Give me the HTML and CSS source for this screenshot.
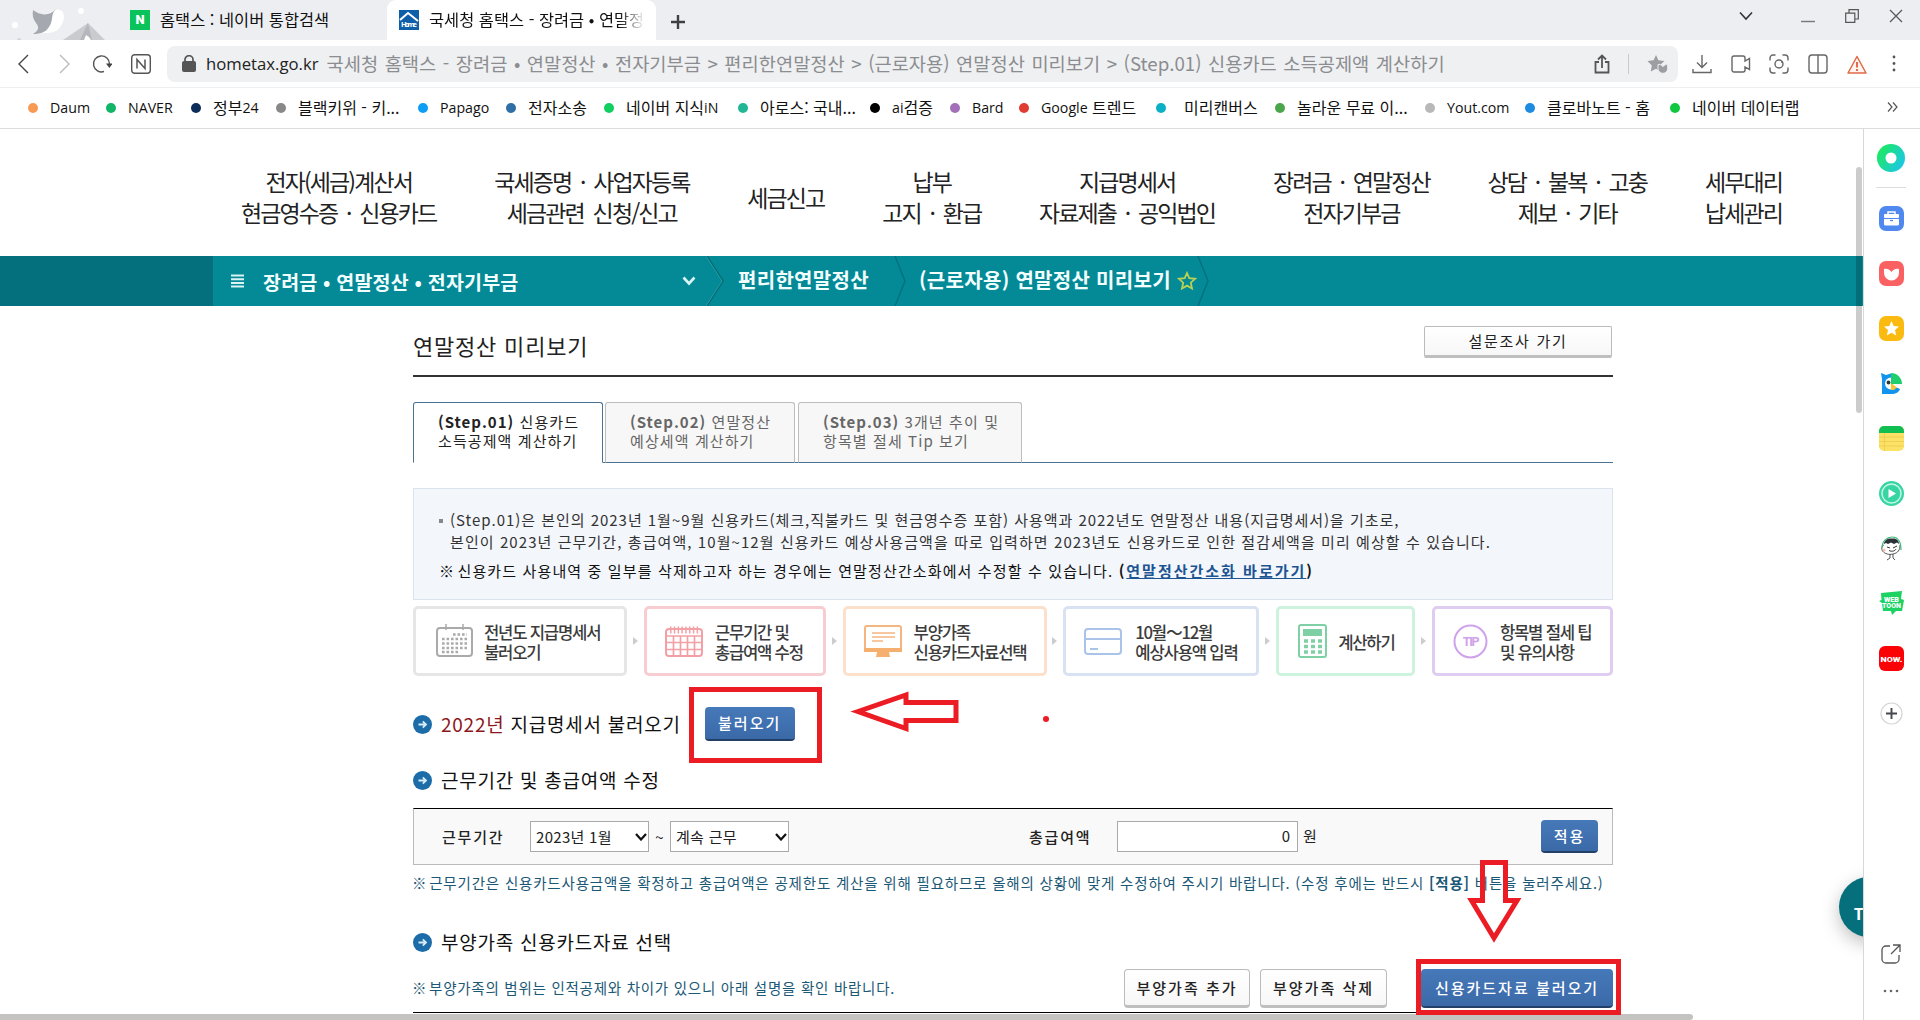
FILE: index.html
```html
<!DOCTYPE html>
<html lang="ko">

<head>
    <meta charset="UTF-8">
    <meta name="viewport" content="width=device-width, initial-scale=1.0">
    <title>국세청 홈택스 - 장려금 • 연말정산 • 전자기부금</title>
    <link rel="stylesheet" href="styles.css">
</head>

<body>
    <!-- browser tabs -->
    <div class="tabstrip">
        <svg class="skin" width="120" height="40" viewBox="0 0 120 40">
            <path d="M63 40 L88 23 L105 40Z" fill="#c9cbcf" />
            <path d="M88 23 L92 40 H80Z" fill="#b4b7bc" />
            <path d="M84 40 l2-5 3 2 2 3Z" fill="#fff" />
            <path d="M33 10 C40 16 48 15 54 10 C60 8 64 11 64 17 C63 28 55 34 45 33 L34 34 C40 30 40 27 37 23 C33 19 32 15 33 10Z" fill="#fff" />
            <path d="M33 10 C40 15 48 17 56 9 C50 15 54 20 49 27 C45 33 40 34 33 34 C38 31 40 28 36 23 C33 19 32 15 33 10Z" fill="#a5a9af" />
            <circle cx="81" cy="11" r="3" fill="#fff" />
            <circle cx="15" cy="25" r="3" fill="#fff" />
            <circle cx="19" cy="40" r="2" fill="#d2d4d8" />
        </svg>
        <div class="tab">
            <div class="naver_icon">N</div>
            <span>홈택스 : 네이버 통합검색</span>
        </div>
        <div class="tab tab_on">
            <svg width="20" height="20" viewBox="0 0 20 20">
                <rect width="20" height="20" fill="#0f5fa8" />
                <path d="M1 10 L9 3 L19 11" fill="none" stroke="#fff" stroke-width="2" />
                <text x="2" y="17" font-size="7.5" font-weight="bold" fill="#fff" font-family="Open Sans" textLength="16">Home</text>
            </svg>
            <span>국세청 홈택스 - 장려금 • 연말정</span>
        </div>
        <svg class="newtab" width="16" height="16" viewBox="0 0 16 16"><path d="M8 1V15M1 8H15" stroke="#3c4043" stroke-width="2.4" /></svg>
        <div class="win">
            <svg width="14" height="14" viewBox="0 0 14 14"><path d="M1 3.5L7 10L13 3.5" fill="none" stroke="#333" stroke-width="1.6" /></svg>
            <svg width="14" height="14" viewBox="0 0 14 14"><path d="M0 12.5H14" stroke="#777" stroke-width="1.4" /></svg>
            <svg width="14" height="14" viewBox="0 0 14 14"><path d="M.7 4.2H9.8V13.3H.7ZM4 4V.7H13.3V10H10" fill="none" stroke="#555" stroke-width="1.2" /></svg>
            <svg width="14" height="14" viewBox="0 0 14 14"><path d="M1 1L13 13M13 1L1 13" stroke="#555" stroke-width="1.2" /></svg>
        </div>
    </div>

    <!-- address bar -->
    <div class="toolbar">
        <div class="navs">
            <svg width="12" height="20" viewBox="0 0 12 20"><path d="M11 1L2 10L11 19" fill="none" stroke="#444" stroke-width="1.4" /></svg>
            <svg width="12" height="20" viewBox="0 0 12 20"><path d="M1 1L10 10L1 19" fill="none" stroke="#bbb" stroke-width="1.4" /></svg>
            <svg width="20" height="20" viewBox="0 0 20 20"><path d="M12 17.5A8 8 0 1 1 17.5 10" fill="none" stroke="#555" stroke-width="1.4" /><path d="M14 9.5H20.5L17.4 14Z" fill="#444" /></svg>
            <svg width="20" height="20" viewBox="0 0 20 20"><rect x=".7" y=".7" width="18.6" height="18.6" rx="3" fill="none" stroke="#555" stroke-width="1.4" /><path d="M6 14.5V5.5L14 14.5V5.5" fill="none" stroke="#555" stroke-width="1.5" /></svg>
        </div>
        <div class="address">
            <svg width="14" height="17" viewBox="0 0 14 17"><rect x="0" y="6" width="14" height="11" rx="2" fill="#555" /><path d="M3 7V4.5A4 3.8 0 0 1 11 4.5V7" fill="none" stroke="#555" stroke-width="1.7" /></svg>
            <span class="host">hometax.go.kr</span>
            <span class="path">국세청 홈택스 - 장려금 • 연말정산 • 전자기부금 &gt; 편리한연말정산 &gt; (근로자용) 연말정산 미리보기 &gt; (Step.01) 신용카드 소득공제액 계산하기</span>
            <svg class="share" width="16" height="20" viewBox="0 0 16 20"><path d="M5 8H1.5V18.5H14.5V8H11M8 14V2M4 5.5L8 1.5L12 5.5" fill="none" stroke="#555" stroke-width="1.8" /></svg>
            <i class="bar"></i>
            <svg width="21" height="20" viewBox="0 0 21 20"><path d="M9 1L11.4 6.3L17.5 7L13 11V17L9 14.8L3.8 17.5L4.8 11.5L.5 7L6.6 6.3Z" fill="#9c9ea1" /><path d="M11 10.5C12.5 10 14.5 11 16 12.5C17.5 11 19.5 10 20.7 10.5V14.5A4.8 4.8 0 0 1 11 14.5Z" fill="#9c9ea1" stroke="#eff0f2" /></svg>
        </div>
        <div class="tools">
            <svg width="20" height="20" viewBox="0 0 20 20"><path d="M10 1V13M5 8.5L10 13.5L15 8.5M1 15V18.5H19V15" fill="none" stroke="#666" stroke-width="1.4" /></svg>
            <svg width="20" height="20" viewBox="0 0 20 20"><path d="M3 2H12A2 2 0 0 1 14 4V7L18.5 4.5V15.5L14 13V16A2 2 0 0 1 12 18H3A2 2 0 0 1 1 16V4A2 2 0 0 1 3 2Z" fill="none" stroke="#666" stroke-width="1.4" /></svg>
            <svg width="20" height="20" viewBox="0 0 20 20"><path d="M1 6.5V4A3 3 0 0 1 4 1H6.5M13.5 1H16A3 3 0 0 1 19 4V6.5M19 13.5V16A3 3 0 0 1 16 19H13.5M6.5 19H4A3 3 0 0 1 1 16V13.5" fill="none" stroke="#666" stroke-width="1.4" /><circle cx="10" cy="10" r="4" fill="none" stroke="#666" stroke-width="1.4" /><circle cx="13" cy="8" r="1" fill="#666" /></svg>
            <svg width="20" height="20" viewBox="0 0 20 20"><rect x="1" y="1" width="18" height="18" rx="3" fill="none" stroke="#666" stroke-width="1.4" /><path d="M10 1V19" stroke="#666" stroke-width="1.4" /></svg>
            <svg width="20" height="20" viewBox="0 0 20 20"><path d="M10 2.5L19 19H1Z" fill="#fff5f0" stroke="#e06a48" stroke-width="1.5" stroke-linejoin="round" /><path d="M10 8V13.5M10 15V17" stroke="#e2512c" stroke-width="1.7" /></svg>
            <svg width="20" height="20" viewBox="0 0 20 20"><circle cx="9" cy="3" r="1.4" fill="#555" /><circle cx="9" cy="9.5" r="1.4" fill="#555" /><circle cx="9" cy="16" r="1.4" fill="#555" /></svg>
        </div>
    </div>

    <!-- bookmarks -->
    <ul class="bookmarks">
        <li class="c1"><b>Daum</b></li>
        <li class="c2"><b>NAVER</b></li>
        <li class="c3">정부<b>24</b></li>
        <li class="c4">블랙키위 - 키...</li>
        <li class="c5"><b>Papago</b></li>
        <li class="c6">전자소송</li>
        <li class="c7">네이버 지식<b>iN</b></li>
        <li class="c8">아로스: 국내...</li>
        <li class="c9"><b>ai</b>검증</li>
        <li class="c10"><b>Bard</b></li>
        <li class="c11"><b>Google</b> 트렌드</li>
        <li class="c12">미리캔버스</li>
        <li class="c13">놀라운 무료 이...</li>
        <li class="c14"><b>Yout.com</b></li>
        <li class="c15">클로바노트 - 홈</li>
        <li class="c16">네이버 데이터랩</li>
        <li class="more"><svg width="12" height="10" viewBox="0 0 12 10"><path d="M1 .5L5 5L1 9.5M6 .5L10 5L6 9.5" fill="none" stroke="#555" stroke-width="1.2" /></svg></li>
    </ul>

    <div class="view">
        <div class="page">
            <div class="gnb">
                <a>전자(세금)계산서<br>현금영수증 · 신용카드</a>
                <a>국세증명 · 사업자등록<br>세금관련 신청/신고</a>
                <a>세금신고</a>
                <a>납부<br>고지 · 환급</a>
                <a>지급명세서<br>자료제출 · 공익법인</a>
                <a>장려금 · 연말정산<br>전자기부금</a>
                <a>상담 · 불복 · 고충<br>제보 · 기타</a>
                <a>세무대리<br>납세관리</a>
            </div>

            <div class="lnb">
                <div class="lnb_menu">
                    <svg width="13" height="14" viewBox="0 0 13 14"><path d="M0 1.5H13M0 5.2H13M0 8.9H13M0 12.6H13" stroke="#d8f5f4" stroke-width="2" /></svg>
                    <span>장려금 • 연말정산 • 전자기부금</span>
                    <svg class="down" width="14" height="10" viewBox="0 0 14 10"><path d="M1.5 1.5L7 7.5L12.5 1.5" fill="none" stroke="#d8f5f4" stroke-width="2.6" /></svg>
                </div>
                <svg class="step_line" width="18" height="50" viewBox="0 0 18 50"><path d="M1 0L17 25L1 50" fill="none" stroke="#03656f" stroke-width="1.3" /><path d="M0 0L16 25L0 50" fill="none" stroke="#38a5ad" stroke-width=".7" /></svg>
                <span class="lnb_two">편리한연말정산</span>
                <svg class="step_line" width="12" height="50" viewBox="0 0 12 50"><path d="M1 0L11 25L1 50" fill="none" stroke="#03707b" stroke-width="1.3" /></svg>
                <span class="lnb_three">(근로자용) 연말정산 미리보기</span>
                <svg width="20" height="20" viewBox="0 0 20 20"><path d="M10 2L12.3 7.2L18 7.8L13.8 11.7L15 17.5L10 14.6L5 17.5L6.2 11.7L2 7.8L7.7 7.2Z" fill="none" stroke="#b6d154" stroke-width="1.8" /></svg>
                <svg class="step_line" width="12" height="50" viewBox="0 0 12 50"><path d="M1 0L11 25L1 50" fill="none" stroke="#03707b" stroke-width="1.3" /></svg>
            </div>

            <div class="content">
                <div class="title">
                    <h2>연말정산 미리보기</h2>
                    <button class="btn survey">설문조사 가기</button>
                </div>

                <div class="steps">
                    <div class="step step_on"><b>(Step.01)</b> 신용카드<br>소득공제액 계산하기</div>
                    <div class="step"><b>(Step.02)</b> 연말정산<br>예상세액 계산하기</div>
                    <div class="step wide"><b>(Step.03)</b> 3개년 추이 및<br>항목별 절세 Tip 보기</div>
                </div>

                <div class="info">
                    <p class="dot">(Step.01)은 본인의 2023년 1월~9월 신용카드(체크,직불카드 및 현금영수증 포함) 사용액과 2022년도 연말정산 내용(지급명세서)을 기초로,</p>
                    <p class="dot_next">본인이 2023년 근무기간, 총급여액, 10월~12월 신용카드 예상사용금액을 따로 입력하면 2023년도 신용카드로 인한 절감세액을 미리 예상할 수 있습니다.</p>
                    <p class="mark"><i class="ref">※</i> 신용카드 사용내역 중 일부를 삭제하고자 하는 경우에는 연말정산간소화에서 수정할 수 있습니다. <b>(<a>연말정산간소화 바로가기</a>)</b></p>
                </div>

                <div class="flow">
                    <div class="card gray">
                        <svg width="38" height="34" viewBox="0 0 38 34"><rect x="1" y="4" width="35" height="28" rx="3" fill="none" stroke="#aaa" stroke-width="2" /><path d="M10 0V6M27 0V6" stroke="#aaa" stroke-width="1.5" /><path d="M17 10.5H31M6 15H31M6 19.5H31M6 24H31M6 28H23" stroke="#aaa" stroke-width="2.6" stroke-dasharray="2.6 1.9" /></svg>
                        <span>전년도 지급명세서<br>불러오기</span>
                    </div>
                    <i></i>
                    <div class="card red">
                        <svg width="38" height="34" viewBox="0 0 38 34"><rect x="1" y="5" width="36" height="27" rx="3" fill="none" stroke="#f2a0a5" stroke-width="2" /><path d="M1 12H37M1 18.5H37M1 25.5H37M8.5 12V32M15.5 12V32M22.5 12V32M29.5 12V32" stroke="#f2a0a5" stroke-width="1.7" /><path d="M5 6H34" stroke="#f2a0a5" stroke-width="7" stroke-dasharray="1.5 2.3" /></svg>
                        <span>근무기간 및<br>총급여액 수정</span>
                    </div>
                    <i></i>
                    <div class="card orange">
                        <svg width="38" height="36" viewBox="0 0 38 36"><rect x="1" y="3" width="36" height="25" rx="2" fill="none" stroke="#f5b580" stroke-width="2" /><path d="M0 25H38V29H25L26 34H12L13 29H0Z" fill="#f5b06f" /><path d="M8 10H31M8 14H31M8 18H19" stroke="#f5b580" stroke-width="1.7" /></svg>
                        <span>부양가족<br>신용카드자료선택</span>
                    </div>
                    <i></i>
                    <div class="card blue">
                        <svg width="38" height="34" viewBox="0 0 38 34"><rect x="1" y="5" width="36" height="25" rx="3" fill="none" stroke="#aac3e8" stroke-width="2" /><path d="M1 15H37M6 25H14" stroke="#aac3e8" stroke-width="2.2" /></svg>
                        <span>10월～12월<br>예상사용액 입력</span>
                    </div>
                    <i></i>
                    <div class="card green">
                        <svg width="29" height="34" viewBox="0 0 29 34"><rect x="1" y="1" width="27" height="32" rx="2" fill="none" stroke="#7fd1a5" stroke-width="2" /><rect x="5" y="5" width="19" height="7" fill="#7fd1a5" /><path d="M6 17H24M6 22.5H24M6 28H24" stroke="#7fd1a5" stroke-width="3.4" stroke-dasharray="4 3" /></svg>
                        <span>계산하기</span>
                    </div>
                    <i></i>
                    <div class="card purple">
                        <svg width="35" height="35" viewBox="0 0 35 35"><circle cx="17.5" cy="17.5" r="16" fill="none" stroke="#cfa2ec" stroke-width="2" /><text x="17.5" y="22" text-anchor="middle" font-family="Roboto" font-size="12.5" font-weight="bold" fill="#cfa2ec">TIP</text></svg>
                        <span>항목별 절세 팁<br>및 유의사항</span>
                    </div>
                </div>

                <div class="head first">
                    <svg width="19" height="19" viewBox="0 0 19 19"><circle cx="9.5" cy="9.5" r="9.5" fill="#1b6ca8" /><path d="M5.5 9.5H12.5M9.8 6.4L13 9.5L9.8 12.6" fill="none" stroke="#d5ecfa" stroke-width="1.8" /></svg>
                    <h3><em>2022년</em> 지급명세서 불러오기</h3>
                    <button class="btn_blue load">불러오기</button>
                </div>

                <div class="head">
                    <svg width="19" height="19" viewBox="0 0 19 19"><circle cx="9.5" cy="9.5" r="9.5" fill="#1b6ca8" /><path d="M5.5 9.5H12.5M9.8 6.4L13 9.5L9.8 12.6" fill="none" stroke="#d5ecfa" stroke-width="1.8" /></svg>
                    <h3>근무기간 및 총급여액 수정</h3>
                </div>

                <div class="form">
                    <label class="label_term">근무기간</label>
                    <div class="select">2023년 1월<svg width="12" height="8" viewBox="0 0 12 8"><path d="M1 1L6 6.5L11 1" fill="none" stroke="#111" stroke-width="2.2" /></svg></div>
                    <span class="tilde">~</span>
                    <div class="select">계속 근무<svg width="12" height="8" viewBox="0 0 12 8"><path d="M1 1L6 6.5L11 1" fill="none" stroke="#111" stroke-width="2.2" /></svg></div>
                    <label class="label_pay">총급여액</label>
                    <div class="money">0</div>
                    <span class="won">원</span>
                    <button class="btn_blue apply">적용</button>
                </div>
                <p class="note note_term"><i class="ref">※</i> 근무기간은 신용카드사용금액을 확정하고 총급여액은 공제한도 계산을 위해 필요하므로 올해의 상황에 맞게 수정하여 주시기 바랍니다. (수정 후에는 반드시 <b>[적용]</b> 버튼을 눌러주세요.)</p>

                <div class="head third">
                    <svg width="19" height="19" viewBox="0 0 19 19"><circle cx="9.5" cy="9.5" r="9.5" fill="#1b6ca8" /><path d="M5.5 9.5H12.5M9.8 6.4L13 9.5L9.8 12.6" fill="none" stroke="#d5ecfa" stroke-width="1.8" /></svg>
                    <h3>부양가족 신용카드자료 선택</h3>
                </div>
                <div class="family">
                    <p class="note"><i class="ref">※</i> 부양가족의 범위는 인적공제와 차이가 있으니 아래 설명을 확인 바랍니다.</p>
                    <button class="btn add">부양가족 추가</button>
                    <button class="btn del">부양가족 삭제</button>
                    <button class="btn_blue card_load">신용카드자료 불러오기</button>
                </div>
                <div class="table_top"></div>
            </div>

            <div class="top_btn">Top</div>
            <div class="scroll_y"></div>
            <div class="scroll_x"></div>
        </div>

        <!-- whale sidebar -->
        <div class="side">
            <svg width="28" height="28" viewBox="0 0 28 28">
                <defs><linearGradient id="ring" x1="0" y1="0.2" x2="1" y2="0.8"><stop offset="0.1" stop-color="#1be866" /><stop offset="1" stop-color="#1cc4f0" /></linearGradient></defs>
                <circle cx="14" cy="14" r="14" fill="url(#ring)" /><circle cx="14" cy="14" r="5.5" fill="#fff" />
            </svg>
            <hr>
            <svg width="25" height="25" viewBox="0 0 25 25"><rect width="25" height="25" rx="7" fill="#4f88ee" /><path d="M9 8V6H16V8" fill="none" stroke="#fff" stroke-width="1.5" /><rect x="5" y="8" width="15" height="4" rx="1" fill="#fff" /><path d="M5 13H20V18A1.5 1.5 0 0 1 18.5 19.5H6.5A1.5 1.5 0 0 1 5 18Z" fill="#fff" /><path d="M11 14.5H14" stroke="#4f88ee" stroke-width="1.3" /></svg>
            <svg width="25" height="25" viewBox="0 0 25 25"><rect width="25" height="25" rx="7" fill="#fa6163" /><path d="M5 8C8 7 11 8.5 12.5 11C14 8.5 17 7 20 8V12A7.5 7.5 0 0 1 5 12Z" fill="#fff" /></svg>
            <svg width="25" height="25" viewBox="0 0 25 25"><rect width="25" height="25" rx="7" fill="#fbba0f" /><path d="M12.5 5L14.7 10L20 10.5L16 14L17.2 19.5L12.5 16.7L7.8 19.5L9 14L5 10.5L10.3 10Z" fill="#fff" /></svg>
            <svg width="25" height="25" viewBox="0 0 25 25"><path d="M2 2L7 4L12 2.500V9L8 23H3V8Z" fill="#1293ee" /><path d="M3 12L12 14L21 18C20 21 17 23 12 23H3Z" fill="#1293ee" /><path d="M12 2A11 11 0 0 1 23 13H12Z" fill="#1fce6d" /><path d="M12 6.500A6 6 0 1 0 12 18.500Z" fill="#fff" /><circle cx="9.500" cy="11.500" r="1.900" fill="#333" /><path d="M12 13H14L18 16.500L15 19H12Z" fill="#f3c53a" /><path d="M14 13H18V16.500Z" fill="#fff" /></svg>
            <svg width="25" height="25" viewBox="0 0 25 25"><rect width="25" height="25" rx="5" fill="#fbe266" /><path d="M0 7V5A5 5 0 0 1 5 0H20A5 5 0 0 1 25 5V7Z" fill="#11be52" /><path d="M0 11H25M0 15.5H25M0 20H25M5.5 7V25" stroke="#ecca4d" stroke-width=".8" /></svg>
            <svg width="25" height="25" viewBox="0 0 25 25"><circle cx="12.5" cy="12.5" r="12.5" fill="#37d5a2" /><circle cx="12.5" cy="12.5" r="9.5" fill="none" stroke="#c4f7e6" stroke-width="1.5" /><path d="M9.5 8L17 12.5L9.5 17Z" fill="#fff" /></svg>
            <svg width="25" height="25" viewBox="0 0 25 25"><path d="M5 8C5 4 9 2 13 2.5C18 2 20 5 20 8L18 6.5L15 8L12 6.500L9 8L7 7Z" fill="#2c3038" /><path d="M5 9C3 10 2 12 3.5 15C6 18 10 19 14 18C19 17 21 14 21 9M11 18V22L8 24M14 18V22L16 24" fill="none" stroke="#555" stroke-width="1" /><path d="M3 12C3 5 8 1 13 1C19 1 22 6 22 14" fill="none" stroke="#3db879" stroke-width="1.2" /><path d="M8 11L11 12M14 12L18 10M10 14.500C13 16 16 15 17 13" fill="none" stroke="#333" stroke-width="1" /><circle cx="5" cy="14" r="1.5" fill="#f7bcb4" /></svg>
            <svg width="25" height="25" viewBox="0 0 25 25"><path d="M2 2L23 0L22 8L25 9L23 20H17L13 24L12 20H4L3 12L0 10L2.5 9Z" fill="#1bd263" /><text x="5" y="10.5" textLength="15" lengthAdjust="spacingAndGlyphs" font-family="Roboto" font-weight="900" font-size="7.5" fill="#fff">WEB</text><text x="3" y="17" textLength="19" lengthAdjust="spacingAndGlyphs" font-family="Roboto" font-weight="900" font-size="7.5" fill="#fff">TOON</text></svg>
            <svg width="25" height="25" viewBox="0 0 25 25"><rect width="25" height="25" rx="6" fill="#fb0207" /><text x="1.5" y="15.5" textLength="22" lengthAdjust="spacingAndGlyphs" font-family="Roboto" font-weight="900" font-size="8" fill="#fff">NOW.</text></svg>
            <svg width="25" height="25" viewBox="0 0 25 25"><circle cx="12.5" cy="12.5" r="10.5" fill="#fff" stroke="#d5d5d5" stroke-width="1.2" /><path d="M12.5 7V18M7 12.5H18" stroke="#44474c" stroke-width="1.9" /></svg>
            <svg class="out" width="20" height="20" viewBox="0 0 20 20"><path d="M9 2H5A4 4 0 0 0 1 6V15A4 4 0 0 0 5 19H14A4 4 0 0 0 18 15V11M12 1H19V8M19 1L10 10" fill="none" stroke="#555" stroke-width="1.3" /></svg>
            <svg width="16" height="4" viewBox="0 0 16 4"><circle cx="2" cy="2" r="1.3" fill="#666" /><circle cx="8" cy="2" r="1.3" fill="#666" /><circle cx="14" cy="2" r="1.3" fill="#666" /></svg>
        </div>
    </div>

    <!-- red guide marks drawn over the page -->
    <svg class="guide" width="1920" height="1020" viewBox="0 0 1920 1020">
        <rect x="691.5" y="689.5" width="128" height="71" />
        <path d="M858 711.5L906 695V702.5H956V720.5H906V728.500Z" />
        <path d="M1482.5 862.5H1505.5V900.5H1517L1494 938L1471.5 900.5H1482.5Z" />
        <rect x="1418.5" y="961.5" width="200" height="51" />
        <circle cx="1046" cy="719" r="3" />
    </svg>
</body>

</html>
```

FILE: styles.css
```css
* {
    margin: 0px;
    padding: 0px;
    box-sizing: border-box;
}

body {
    width: 1920px;
    height: 1020px;
    overflow: hidden;
    background-color: #fff;
    font-family: "Noto Sans CJK KR", sans-serif;
    color: #222;
}

svg {
    display: block;
    flex: none;
}

/* browser */
.tabstrip {
    display: flex;
    height: 40px;
    background-color: #edeef2;
    font-size: 16.4px;
    white-space: nowrap;
}

.tab {
    display: flex;
    align-items: center;
    width: 267px;
    padding-left: 10px;
    gap: 10px;
    color: #111;
}

.tab span {
    padding-bottom: 2px;
}

.tab_on {
    width: 269px;
    padding: 0px 11px 0px 12px;
    background-color: #fff;
    border-radius: 9px 9px 0px 0px;
}

.tab_on span {
    flex: 1;
    overflow: hidden;
    -webkit-mask-image: linear-gradient(to right, #000 88%, transparent);
    mask-image: linear-gradient(to right, #000 88%, transparent);
}

.naver_icon {
    width: 20px;
    height: 20px;
    background-color: #0ac35a;
    color: #fff;
    font: 900 13px/20px Roboto, sans-serif;
    text-align: center;
}

.newtab {
    margin: 14px 0px 0px 14px;
}

.win {
    display: flex;
    margin: 9px 17px 0px auto;
}

.win svg {
    margin-left: 30px;
}

.win svg:nth-child(2) {
    margin-left: 48px;
}

.toolbar {
    display: flex;
    align-items: center;
    height: 48px;
    border-bottom: 1px solid #eeeff1;
}

.navs {
    display: flex;
    width: 167px;
    padding-left: 17px;
}

.navs svg {
    margin-right: 30px;
}

.navs svg:nth-child(2) {
    margin-right: 21px;
}

.navs svg:nth-child(3) {
    margin-right: 19px;
}

.address {
    display: flex;
    align-items: center;
    width: 1511px;
    height: 36px;
    padding: 0px 10px 0px 15px;
    border-radius: 8px;
    background-color: #eff0f2;
    white-space: nowrap;
}

.host {
    margin: 0px 8px 0px 10px;
    padding-bottom: 1px;
    font-family: "Open Sans", sans-serif;
    font-size: 16.7px;
    color: #222;
}

.path {
    padding-bottom: 3px;
    font-size: 18.7px;
    word-spacing: 1.3px;
    color: #8b8d90;
}

.share {
    margin-left: auto;
}

.bar {
    width: 1px;
    height: 20px;
    margin: 0px 18px;
    background-color: #c9cacc;
}

.tools {
    display: flex;
    gap: 18.7px;
    padding-left: 14px;
}

.bookmarks {
    display: flex;
    height: 41px;
    padding-left: 28px;
    border-bottom: 1px solid #dcdcdc;
    list-style: none;
    font-size: 16px;
    line-height: 37px;
    color: #111;
}

.bookmarks li {
    display: flex;
    align-items: center;
    flex: none;
    white-space: pre;
    width: 85px;
    height: 38px;
}

.bookmarks li::before {
    content: "";
    width: 10px;
    height: 10px;
    margin: 2px 12px 0px 0px;
    border-radius: 5px;
    background-color: #888;
}

.bookmarks b {
    font-family: "Open Sans", sans-serif;
    font-size: 14.2px;
    font-weight: normal;
}

.bookmarks .c1 { width: 78px; }
.bookmarks .c4 { width: 142px; }
.bookmarks .c5 { width: 88px; }
.bookmarks .c6 { width: 98px; }
.bookmarks .c7 { width: 134px; }
.bookmarks .c8 { width: 132px; }
.bookmarks .c9 { width: 80px; }
.bookmarks .c10 { width: 69px; }
.bookmarks .c11 { width: 137px; }
.bookmarks .c12 { width: 119px; }
.bookmarks .c13 { width: 150px; }
.bookmarks .c14 { width: 100px; }
.bookmarks .c15 { width: 145px; }
.bookmarks .c16 { width: 217px; }
.bookmarks .c1::before { background-color: #f79a55; }
.bookmarks .c2::before { background-color: #10b566; }
.bookmarks .c3::before { background-color: #0c2c5a; }
.bookmarks .c5::before { background-color: #0e9df5; }
.bookmarks .c6::before { background-color: #2f6fa5; }
.bookmarks .c7::before { background-color: #10cf60; }
.bookmarks .c8::before { background-color: #22b794; }
.bookmarks .c9::before { background-color: #000; }
.bookmarks .c10::before { background-color: #a26fb8; }
.bookmarks .c11::before { background-color: #e03c31; }
.bookmarks .c12::before { background-color: #0cb0c4; margin-right: 18px; }
.bookmarks .c13::before { background-color: #4aa64c; }
.bookmarks .c14::before { background-color: #b8b8b8; }
.bookmarks .c15::before { background-color: #1d8ce0; }
.bookmarks .c16::before { background-color: #10c840; }

.bookmarks .more::before {
    display: none;
}

/* page */
.view {
    display: flex;
    height: 891px;
}

.page {
    position: relative;
    width: 1863px;
    height: 891px;
    overflow: hidden;
}

.gnb {
    display: flex;
    justify-content: space-between;
    align-items: center;
    height: 127px;
    padding: 9px 81px 0px 241px;
    font-size: 23px;
    line-height: 31px;
    letter-spacing: -1.9px;
    word-spacing: 4.2px;
    text-align: center;
    white-space: nowrap;
    color: #222;
}

.lnb {
    display: flex;
    align-items: center;
    height: 50px;
    padding-left: 213px;
    background: linear-gradient(to right, #04707d 213px, #048996 213px);
    color: #f2ffff;
    font-size: 20px;
    font-weight: bold;
    letter-spacing: 0.3px;
    white-space: nowrap;
}

.lnb_menu {
    display: flex;
    align-items: center;
    width: 493px;
    padding: 0px 10px 0px 18px;
    font-size: 19.5px;
    letter-spacing: 0.2px;
}

.lnb_menu span {
    margin-left: 19px;
}

.down {
    margin-left: auto;
}

.lnb_two {
    width: 170px;
    padding: 0px 0px 3px 14px;
}

.lnb_three {
    width: 271px;
    padding: 0px 0px 3px 13px;
}

.content {
    width: 1200px;
    margin-left: 413px;
}

.title {
    display: flex;
    justify-content: space-between;
    height: 71px;
    padding-top: 20px;
    border-bottom: 2px solid #333;
}

.title h2 {
    font-size: 22px;
    font-weight: normal;
    line-height: 38px;
    letter-spacing: 0.8px;
}

.btn {
    padding-bottom: 1px;
    border: 1px solid #bbb;
    border-bottom: 3px solid #bfbfbf;
    border-radius: 4px;
    background: linear-gradient(#fff, #f7f7f7);
    font-family: "Noto Sans CJK KR", sans-serif;
    font-size: 15px;
    font-weight: 500;
    letter-spacing: 2px;
    color: #222;
}

.survey {
    width: 188px;
    height: 32px;
    margin-right: 1px;
    border-radius: 2px;
    font-weight: normal;
    letter-spacing: 1.7px;
}

.steps {
    display: flex;
    height: 61px;
    margin-top: 25px;
    border-bottom: 1px solid #4a7292;
}

.step {
    width: 190px;
    height: 61px;
    margin-right: 3px;
    padding: 9px 0px 0px 24px;
    border: 1px solid #bdbdbd;
    border-bottom: 1px solid #4a7292;
    border-radius: 3px 3px 0px 0px;
    background-color: #f7f7f7;
    font-size: 15px;
    line-height: 19px;
    letter-spacing: 1.1px;
    color: #666;
    white-space: nowrap;
}

.step b {
    letter-spacing: 1px;
}

.step_on {
    margin-right: 2px;
    border-color: #4a7292;
    border-bottom-color: #fff;
    background-color: #fff;
    color: #222;
}

.wide {
    width: 224px;
}

.info {
    height: 112px;
    margin-top: 25px;
    padding: 20px 24px;
    border: 1px solid #dbe3ed;
    background-color: #f3f6fb;
    font-size: 15px;
    line-height: 22px;
    letter-spacing: 1px;
    white-space: nowrap;
    color: #333;
}

.dot {
    position: relative;
    padding-left: 12px;
    letter-spacing: 0.97px;
}

.dot::before {
    content: "";
    position: absolute;
    left: 1px;
    top: 10px;
    width: 4px;
    height: 4px;
    background-color: #888;
}

.dot_next {
    padding-left: 12px;
    letter-spacing: 1.08px;
}

.mark {
    margin-top: 7px;
    padding-left: 2px;
    letter-spacing: 1.13px;
    color: #111;
}

.mark b {
    letter-spacing: 2px;
}

.mark a {
    color: #1c5592;
    text-decoration: underline;
}

.ref {
    margin: 0px -3px 0px -1px;
    font-style: normal;
}

.flow {
    display: flex;
    align-items: center;
    justify-content: space-between;
    height: 70px;
    margin-top: 6px;
}

.flow i {
    border-left: 5px solid #ccc;
    border-top: 4px solid transparent;
    border-bottom: 4px solid transparent;
}

.card {
    display: flex;
    align-items: center;
    height: 70px;
    border: 3px solid #e6e6e6;
    border-radius: 5px;
    font-size: 16.7px;
    font-weight: 500;
    line-height: 20px;
    letter-spacing: -1.25px;
    white-space: nowrap;
    color: #3c3c3c;
}

.card span {
    padding-top: 1px;
}

.gray { width: 214px; padding-left: 20px; gap: 10px; }
.red { width: 182px; padding-left: 18px; gap: 12px; border-color: #f7cdd1; }
.orange { width: 204px; padding-left: 18px; gap: 12px; border-color: #fbe0cb; }
.blue { width: 196px; padding-left: 18px; gap: 13px; border-color: #d8e2f3; }
.green { width: 139px; padding-left: 19px; gap: 11px; border-color: #cdf3df; }
.purple { width: 181px; padding-left: 18px; gap: 12px; border-color: #dfcdf1; }

.head {
    display: flex;
    align-items: center;
    height: 34px;
    margin-top: 22px;
}

.head h3 {
    margin-left: 9px;
    padding-bottom: 2px;
    font-size: 19px;
    font-weight: normal;
    letter-spacing: 0.75px;
    color: #111;
}

.head em {
    font-style: normal;
    color: #8c1620;
}

.first {
    margin-top: 31px;
}

.btn_blue {
    padding-bottom: 1px;
    border: none;
    border-bottom: 2px solid #223f68;
    border-radius: 4px;
    background: linear-gradient(#4679b9, #3b69a8);
    font-family: "Noto Sans CJK KR", sans-serif;
    font-size: 15px;
    font-weight: 500;
    letter-spacing: 2px;
    color: #fff;
}

.load {
    width: 90px;
    height: 34px;
    margin-left: 24px;
}

.form {
    display: flex;
    align-items: center;
    height: 57px;
    margin-top: 11px;
    border: 1px solid #bbb;
    border-top: 1px solid #000;
    background-color: #f9f9f9;
    font-size: 15px;
    color: #222;
}

.form label {
    font-weight: 500;
    letter-spacing: 1.8px;
}

.label_term {
    width: 116px;
    padding-left: 28px;
}

.select {
    display: flex;
    align-items: center;
    justify-content: space-between;
    width: 119px;
    height: 31px;
    padding: 0px 1px 0px 5px;
    border: 1px solid #aaa;
    background-color: #fff;
    letter-spacing: 0.3px;
}

.tilde {
    width: 21px;
    text-align: center;
}

.label_pay {
    width: 328px;
    padding-left: 240px;
}

.money {
    width: 181px;
    height: 31px;
    padding-right: 7px;
    border: 1px solid #aaa;
    background-color: #fff;
    line-height: 27px;
    text-align: right;
}

.won {
    margin-left: 5px;
    padding-bottom: 2px;
}

.apply {
    width: 57px;
    height: 33px;
    margin: 0px 14px 0px auto;
}

.note {
    font-size: 14.5px;
    line-height: 22px;
    letter-spacing: 0.82px;
    white-space: nowrap;
    color: #1b5876;
}

.note_term {
    margin-top: 7px;
}

.third {
    margin-top: 31px;
}

.family {
    display: flex;
    align-items: center;
    height: 39px;
    margin-top: 10px;
}

.family .note {
    padding-bottom: 2px;
    letter-spacing: 0.75px;
}

.family button {
    height: 39px;
}

.family .add {
    width: 126px;
    margin-left: auto;
}

.family .del {
    width: 127px;
    margin: 0px 34px 0px 10px;
}

.family .card_load {
    width: 192px;
}

.table_top {
    height: 10px;
    margin-top: 4px;
    border-top: 1px solid #000;
}

/* floating things */
.top_btn {
    position: absolute;
    left: 1839px;
    top: 748px;
    width: 60px;
    height: 60px;
    padding-left: 15px;
    border-radius: 30px;
    background-color: #056f7c;
    box-shadow: 0px 6px 18px rgba(0, 0, 0, 0.25);
    color: #fff;
    font: bold 16px/74px "Open Sans", sans-serif;
}

.scroll_y {
    position: absolute;
    left: 1856px;
    top: 38px;
    width: 6px;
    height: 246px;
    border-radius: 3px;
    background-color: rgba(0, 0, 0, 0.2);
}

.scroll_x {
    position: absolute;
    left: 0px;
    top: 885px;
    width: 1693px;
    height: 6px;
    border-radius: 0px 3px 3px 0px;
    background-color: #c4c3c2;
}

.side {
    display: flex;
    flex-direction: column;
    align-items: center;
    width: 57px;
    padding: 15px 2px 0px 0px;
    border-left: 1px solid #d8d8d8;
    background-color: #fff;
}

.side hr {
    width: 30px;
    margin: 15px 0px 18px;
    border: none;
    border-top: 1px solid #ddd;
}

.side hr ~ svg {
    margin-bottom: 30px;
}

.side .out {
    margin: auto 0px 25px;
}

.side svg:last-child {
    margin-bottom: 27px;
}

.guide {
    position: absolute;
    left: 0px;
    top: 0px;
    fill: none;
    stroke: #ec1c24;
    stroke-width: 5;
}

.guide circle {
    fill: #ec1c24;
    stroke: none;
}
```
